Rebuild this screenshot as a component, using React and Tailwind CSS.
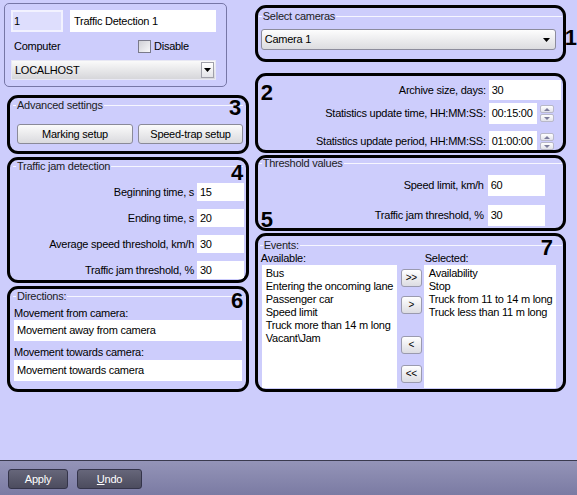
import React from "react";

const Line = ({ className = "" }) => <div className={`h-px bg-[#f6f6ff] ${className}`} />;

const GroupTitle = ({ children, className = "" }) => (
  <div className={`flex items-center h-[13px] ${className}`}>
    <Line className="w-[3px]" />
    <span className="px-[1px] leading-[13px] text-[#1c1c1c] whitespace-nowrap">{children}</span>
    <Line className="flex-1" />
  </div>
);

const Num = ({ children, className = "" }) => (
  <span className={`absolute font-bold text-[22px] leading-none text-black tracking-normal ${className}`}>{children}</span>
);

const Input = ({ children, className = "" }) => (
  <div className={`bg-white flex items-center pl-[3px] whitespace-nowrap overflow-hidden ${className}`}>{children}</div>
);

const Spinner = () => (
  <div className="ml-[3px] w-[14px] h-[17px] flex flex-col gap-px">
    <div className="flex-1 rounded-[2px] border border-[#b8b8c8] bg-linear-to-b from-[#ffffff] to-[#e2e2ea] flex items-center justify-center">
      <svg width="6" height="3" viewBox="0 0 6 3"><path d="M0 3 L3 0 L6 3 Z" fill="#7c7c9c" /></svg>
    </div>
    <div className="flex-1 rounded-[2px] border border-[#b8b8c8] bg-linear-to-b from-[#ffffff] to-[#e2e2ea] flex items-center justify-center">
      <svg width="6" height="3" viewBox="0 0 6 3"><path d="M0 0 L3 3 L6 0 Z" fill="#7c7c9c" /></svg>
    </div>
  </div>
);

const SmallBtn = ({ children, className = "" }) => (
  <div className={`h-[18px] w-[21px] rounded-[3px] border border-[#9a9aae] bg-linear-to-b from-[#ffffff] to-[#dcdce2] flex items-center justify-center text-[10px] leading-none ${className}`}>
    {children}
  </div>
);

const Box = ({ className = "", children }) => (
  <div className={`relative border-[3px] border-black rounded-[11px] overflow-hidden ${className}`}>{children}</div>
);

export default function App() {
  return (
    <div className="w-[577px] h-[495px] bg-[#cdcdfc] flex flex-col font-['Liberation_Sans',Arial,sans-serif] text-[11px] tracking-[-0.25px] text-black overflow-hidden">
      <div className="flex h-[460px]">
        {/* Left column */}
        <div className="w-[256px] flex flex-col pt-[3px]">
          {/* Top panel */}
          <div className="ml-[4px] w-[223px] h-[84px] border border-[#7676a6] rounded-[5px] pt-[6px] pl-[6px] flex flex-col">
            <div className="flex h-[22px]">
              <div className="w-[52px] h-[22px] bg-[#dedefd] border-2 border-[#f2f2ff] flex items-center pl-[1px]">1</div>
              <Input className="ml-[7px] w-[146px] h-[22px] pl-[4px]">Traffic Detection 1</Input>
            </div>
            <div className="flex items-center h-[13px] mt-[8px]">
              <span className="ml-[3px] w-[124px]">Computer</span>
              <div className="w-[13px] h-[13px] border border-[#7a7a8a] bg-linear-to-br from-[#d0d0d6] to-[#f8f8fa]" />
              <span className="ml-[3px]">Disable</span>
            </div>
            <div className="mt-[7px] w-[205px] h-[20px] border border-[#e8e8f4] bg-linear-to-b from-[#fafafa] to-[#d6d6da] flex items-center pl-[3px]">
              <span className="flex-1">LOCALHOST</span>
              <div className="w-[13px] h-[16px] mr-[1px] border border-[#a0a0aa] bg-linear-to-b from-[#ffffff] to-[#e4e4e8] flex items-center justify-center">
                <svg width="7" height="4" viewBox="0 0 7 4"><path d="M0 0 L7 0 L3.5 4 Z" fill="#000" /></svg>
              </div>
            </div>
          </div>

          {/* Box 3 */}
          <Box className="mt-[8px] ml-[7px] w-[242px] h-[59px] pt-[1px]">
            <GroupTitle className="pl-[3px] pr-[3px]">Advanced settings</GroupTitle>
            <div className="flex mt-[12px] ml-[7px] h-[20px]">
              <div className="w-[116px] h-[20px] rounded-[3px] border border-[#8a8a98] bg-linear-to-b from-[#fbfbfb] to-[#dadade] flex items-center justify-center">Marking setup</div>
              <div className="ml-[5px] w-[105px] h-[20px] rounded-[3px] border border-[#8a8a98] bg-linear-to-b from-[#fbfbfb] to-[#dadade] flex items-center justify-center">Speed-trap setup</div>
            </div>
            <Num className="left-[219px] top-[-1px]">3</Num>
          </Box>

          {/* Box 4 */}
          <Box className="mt-[3px] ml-[7px] w-[242px] h-[126px]">
            <GroupTitle className="pl-[3px] pr-[3px]">Traffic jam detection</GroupTitle>
            <div className="flex flex-col gap-[8px] mt-[10px] pr-[2px]">
              {[
                ["Beginning time, s", "15"],
                ["Ending time, s", "20"],
                ["Average speed threshold, km/h", "30"],
                ["Traffic jam threshold, %", "30"],
              ].map(([l, v]) => (
                <div key={l} className="flex items-center justify-end h-[18px]">
                  <span className="whitespace-nowrap">{l}</span>
                  <Input className="ml-[3px] w-[47px] h-[18px]">{v}</Input>
                </div>
              ))}
            </div>
            <Num className="left-[221px] top-[2px]">4</Num>
          </Box>

          {/* Box 6 */}
          <Box className="mt-[3px] ml-[7px] w-[242px] h-[106px] pt-[1px]">
            <GroupTitle className="pl-[3px] pr-[3px]">Directions:</GroupTitle>
            <div className="ml-[4px] mt-[4px] leading-[13px]">Movement from camera:</div>
            <Input className="ml-[4px] w-[228px] h-[21px]">Movement away from camera</Input>
            <div className="ml-[4px] mt-[5px] leading-[13px]">Movement towards camera:</div>
            <Input className="ml-[4px] mt-[1px] w-[228px] h-[21px]">Movement towards camera</Input>
            <Num className="left-[221px] top-[1px]">6</Num>
          </Box>
        </div>

        {/* Right column */}
        <div className="flex-1 flex flex-col pt-[5px]">
          <div className="flex items-start">
            <Box className="w-[311px] h-[57px] pt-[2px]">
              <GroupTitle className="pl-[1px] pr-[1px]">Select cameras</GroupTitle>
              <div className="mt-[6px] ml-[3px] w-[295px] h-[21px] rounded-[3px] border border-[#8c8c9c] bg-linear-to-b from-[#fdfdfd] to-[#dcdce0] flex items-center pl-[3px] pr-[5px]">
                <span className="flex-1">Camera 1</span>
                <svg width="7" height="4" viewBox="0 0 7 4"><path d="M0 0 L7 0 L3.5 4 Z" fill="#000" /></svg>
              </div>
            </Box>
            <span className="mt-[22px] ml-[-1px] font-bold text-[22px] leading-none tracking-normal">1</span>
          </div>

          {/* Box 2 */}
          <Box className="mt-[11px] w-[311px] h-[80px]">
            <div className="flex items-center mt-[4px] h-[20px]">
              <span className="flex-1 text-right whitespace-nowrap">Archive size, days:</span>
              <div className="ml-[3px] w-[74px] flex">
                <Input className="w-[72px] h-[20px]">30</Input>
              </div>
            </div>
            <div className="flex items-center mt-[3px] h-[21px]">
              <span className="flex-1 text-right whitespace-nowrap">Statistics update time, HH:MM:SS:</span>
              <div className="ml-[3px] w-[74px] flex items-center">
                <Input className="w-[48px] h-[21px]">00:15:00</Input>
                <Spinner />
              </div>
            </div>
            <div className="flex items-center mt-[7px] h-[21px]">
              <span className="flex-1 text-right whitespace-nowrap">Statistics update period, HH:MM:SS:</span>
              <div className="ml-[3px] w-[74px] flex items-center">
                <Input className="w-[48px] h-[21px]">01:00:00</Input>
                <Spinner />
              </div>
            </div>
            <Num className="left-[3px] top-[6px]">2</Num>
          </Box>

          {/* Box 5 */}
          <Box className="mt-[2px] w-[311px] h-[76px]">
            <GroupTitle className="pl-[1px] pr-[1px] -mt-[1px]">Threshold values</GroupTitle>
            <div className="flex items-center mt-[5px] h-[21px]">
              <span className="flex-1 text-right whitespace-nowrap">Speed limit, km/h</span>
              <div className="ml-[4px] w-[75px] flex">
                <Input className="w-[57px] h-[21px]">60</Input>
              </div>
            </div>
            <div className="flex items-center mt-[9px] h-[21px]">
              <span className="flex-1 text-right whitespace-nowrap">Traffic jam threshold, %</span>
              <div className="ml-[4px] w-[75px] flex">
                <Input className="w-[57px] h-[21px]">30</Input>
              </div>
            </div>
            <Num className="left-[3px] top-[51px]">5</Num>
          </Box>

          {/* Box 7 */}
          <Box className="mt-[2px] w-[311px] h-[159px] pt-[3px]">
            <GroupTitle className="pl-[2px] pr-[1px]">Events:</GroupTitle>
            <div className="flex leading-[13px] h-[13px]">
              <span className="ml-[3px] w-[163px]">Available:</span>
              <span className="ml-[1px]">Selected:</span>
            </div>
            <div className="flex h-[123px]">
              <div className="ml-[4px] w-[135px] h-full bg-white pl-[4px] pt-[2px] leading-[13px] whitespace-nowrap overflow-hidden">
                <div>Bus</div>
                <div>Entering the oncoming lane</div>
                <div>Passenger car</div>
                <div>Speed limit</div>
                <div>Truck more than 14 m long</div>
                <div>Vacant\Jam</div>
              </div>
              <div className="ml-[4px] w-[21px] flex flex-col">
                <SmallBtn className="mt-[4px]">&gt;&gt;</SmallBtn>
                <SmallBtn className="mt-[9px]">&gt;</SmallBtn>
                <SmallBtn className="mt-[22px]">&lt;</SmallBtn>
                <SmallBtn className="mt-[11px]">&lt;&lt;</SmallBtn>
              </div>
              <div className="ml-[2px] w-[132px] h-full bg-white pl-[5px] pt-[2px] leading-[13px] whitespace-nowrap overflow-hidden">
                <div>Availability</div>
                <div>Stop</div>
                <div>Truck from 11 to 14 m long</div>
                <div>Truck less than 11 m long</div>
              </div>
            </div>
            <Num className="left-[283px] top-[1px]">7</Num>
          </Box>
        </div>
      </div>

      {/* Bottom bar */}
      <div className="flex-1 border-t border-[#3a3a4e] bg-linear-to-b from-[#9494b8] to-[#7b7ba3] flex items-start pt-[8px] pl-[8px]">
        <div className="w-[60px] h-[20px] rounded-[3px] border border-[#34344a] bg-linear-to-b from-[#66667a] to-[#4c4c5e] text-white flex items-center justify-center">Apply</div>
        <div className="ml-[9px] w-[65px] h-[20px] rounded-[3px] border border-[#34344a] bg-linear-to-b from-[#66667a] to-[#4c4c5e] text-white flex items-center justify-center">
          <span><span className="underline">U</span>ndo</span>
        </div>
      </div>
    </div>
  );
}
